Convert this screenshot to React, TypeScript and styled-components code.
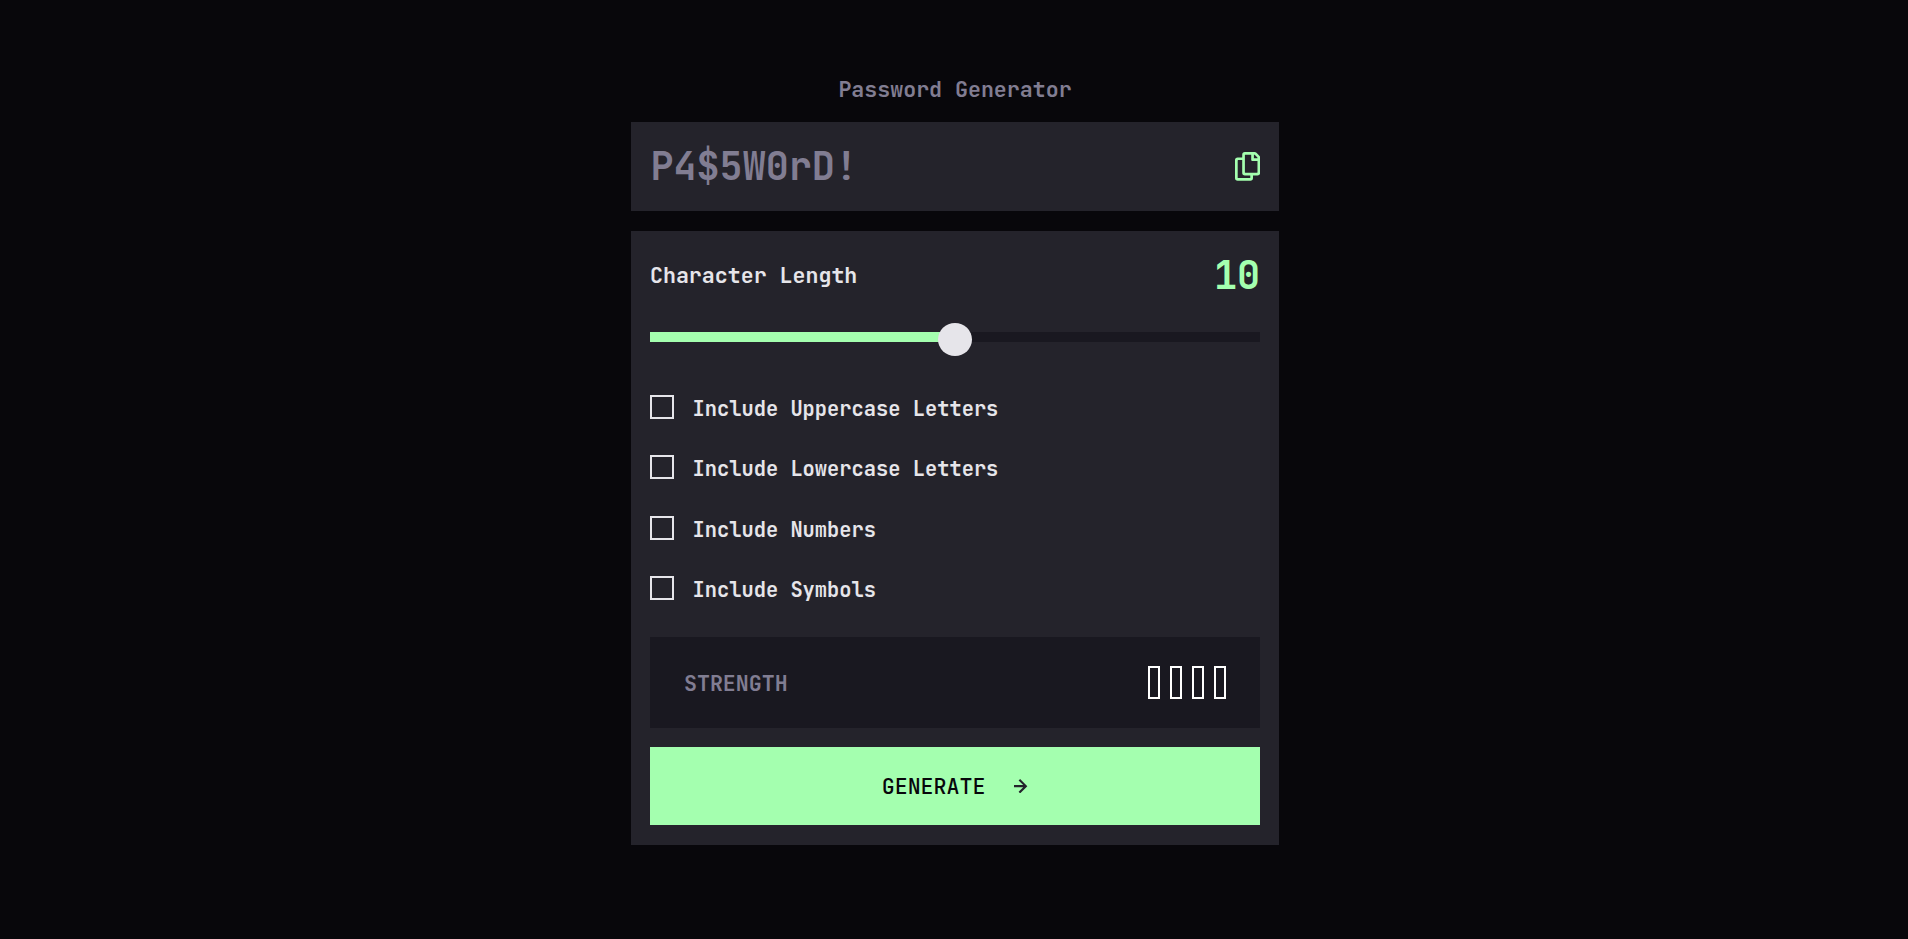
import React, { useState } from 'react';
import styled, { createGlobalStyle } from 'styled-components';

const color = {
  page: '#08070b',
  panel: '#24232b',
  deep: '#191820',
  muted: '#817d92',
  light: '#e6e5ea',
  green: '#a4ffaf',
};

const GlobalStyle = createGlobalStyle`
  * { box-sizing: border-box; }
  body {
    margin: 0;
    background: ${color.page};
    font-family: 'JetBrains Mono', 'DejaVu Sans Mono', monospace;
  }
`;

const Page = styled.main`
  min-height: 939px;
  display: flex;
  flex-direction: column;
  align-items: center;
  padding: 75px 0 0 2px;
`;

const Column = styled.div`
  width: 648px;
  display: flex;
  flex-direction: column;
`;

const Text = styled.span<{ $tone?: string; $weight?: number }>`
  font-size: 21.6px;
  font-weight: ${({ $weight = 600 }) => $weight};
  line-height: 28px;
  white-space: pre;
  color: ${({ $tone = color.light }) => $tone};
`;

const BigText = styled(Text)`
  font-size: 38.4px;
  line-height: 51px;
`;

const Title = styled(Text).attrs({ as: 'h1' })`
  margin: 0 0 19px;
  text-align: center;
`;

const PasswordBox = styled.section`
  height: 89px;
  padding: 0 19px 0 19.5px;
  display: flex;
  align-items: center;
  justify-content: space-between;
  background: ${color.panel};
`;

const IconButton = styled.button`
  display: flex;
  padding: 0;
  border: 0;
  background: none;
  color: ${color.green};
  cursor: pointer;
`;

const Panel = styled.section`
  height: 614px;
  margin-top: 20px;
  padding: 19px 19px 20px;
  display: flex;
  flex-direction: column;
  background: ${color.panel};
`;

const LengthRow = styled.div`
  height: 51px;
  display: flex;
  align-items: center;
  justify-content: space-between;
`;

const LengthLabel = styled(Text)`
  padding-bottom: 1px;
`;

const Slider = styled.input<{ $fill: number }>`
  appearance: none;
  width: 100%;
  height: 10px;
  margin: 31px 0 53px;
  border-radius: 0;
  outline: none;
  background: linear-gradient(
    to right,
    ${color.green} ${({ $fill }) => $fill}%,
    ${color.deep} ${({ $fill }) => $fill}%
  );

  &::-webkit-slider-thumb {
    appearance: none;
    width: 34px;
    height: 33px;
    margin-top: 5px;
    border-radius: 50%;
    background: ${color.light};
    cursor: pointer;
  }
`;

const Options = styled.div`
  height: 205px;
  display: flex;
  flex-direction: column;
  justify-content: space-between;
`;

const Option = styled.label`
  height: 24px;
  display: flex;
  align-items: center;
  gap: 18.5px;
  cursor: pointer;
`;

const OptionText = styled(Text)`
  padding-top: 3px;
  font-size: 20.4px;
  line-height: 27px;
`;

const Checkbox = styled.input`
  appearance: none;
  width: 24px;
  height: 24px;
  margin: 0;
  border: 2px solid ${color.light};

  &:checked {
    border-color: ${color.green};
    background: ${color.green};
  }
`;

const StrengthBox = styled.div`
  height: 91px;
  margin-top: 37px;
  padding: 0 34px;
  display: flex;
  align-items: center;
  justify-content: space-between;
  background: ${color.deep};
`;

const StrengthLabel = styled(Text)`
  padding-top: 1px;
`;

const Bars = styled.div`
  display: flex;
  gap: 10px;
`;

const Bar = styled.span`
  width: 12px;
  height: 33px;
  border: 2px solid #fff;
`;

const GenerateButton = styled.button`
  height: 78px;
  margin-top: 19px;
  padding: 0;
  display: flex;
  align-items: center;
  justify-content: center;
  gap: 28.5px;
  border: 0;
  background: ${color.green};
  color: ${color.panel};
  font-family: inherit;
  cursor: pointer;
`;

const CopyIcon = () => (
  <svg width="25.2" height="28.8" viewBox="0 0 21 24" fill="currentColor">
    <path d="M20.341 3.091 17.909.659A2.25 2.25 0 0 0 16.319 0H8.25A2.25 2.25 0 0 0 6 2.25V4.5H2.25A2.25 2.25 0 0 0 0 6.75v15A2.25 2.25 0 0 0 2.25 24h10.5A2.25 2.25 0 0 0 15 21.75V19.5h3.75A2.25 2.25 0 0 0 21 17.25V4.682a2.25 2.25 0 0 0-.659-1.591ZM12.469 21.75H2.53a.281.281 0 0 1-.281-.281V7.03a.281.281 0 0 1 .281-.281H6v10.5a2.25 2.25 0 0 0 2.25 2.25h4.5v1.969a.282.282 0 0 1-.281.281Zm6-4.5H8.53a.281.281 0 0 1-.281-.281V2.53a.281.281 0 0 1 .281-.281H13.5v4.125c0 .621.504 1.125 1.125 1.125h4.125v9.469a.282.282 0 0 1-.281.281Zm.281-12h-3v-3h.451c.075 0 .147.03.2.082L18.667 4.6a.283.283 0 0 1 .082.199v.451Z" />
  </svg>
);

const ArrowIcon = () => (
  <svg width="14.4" height="14.4" viewBox="0 0 12 12" fill="currentColor">
    <path d="m5.106 12 6-6-6-6-1.265 1.265 3.841 3.84H.001v1.79h7.681l-3.841 3.84z" />
  </svg>
);

const optionNames = ['Uppercase Letters', 'Lowercase Letters', 'Numbers', 'Symbols'];
const maxLength = 20;

export default function App() {
  const [length, setLength] = useState(10);

  return (
    <>
      <GlobalStyle />
      <Page>
        <Column>
          <Title $tone={color.muted} $weight={700}>Password Generator</Title>
          <PasswordBox>
            <BigText $tone={color.muted} $weight={700}>P4$5W0rD!</BigText>
            <IconButton aria-label="Copy password">
              <CopyIcon />
            </IconButton>
          </PasswordBox>
          <Panel>
            <LengthRow>
              <LengthLabel>Character Length</LengthLabel>
              <BigText $tone={color.green}>{length}</BigText>
            </LengthRow>
            <Slider
              type="range"
              min={0}
              max={maxLength}
              value={length}
              $fill={(length / maxLength) * 100}
              onChange={(e) => setLength(Number(e.target.value))}
            />
            <Options>
              {optionNames.map((name) => (
                <Option key={name}>
                  <Checkbox type="checkbox" />
                  <OptionText>Include {name}</OptionText>
                </Option>
              ))}
            </Options>
            <StrengthBox>
              <StrengthLabel $tone={color.muted} $weight={700}>STRENGTH</StrengthLabel>
              <Bars>
                <Bar />
                <Bar />
                <Bar />
                <Bar />
              </Bars>
            </StrengthBox>
            <GenerateButton>
              <Text $tone="#08070b" $weight={500}>GENERATE</Text>
              <ArrowIcon />
            </GenerateButton>
          </Panel>
        </Column>
      </Page>
    </>
  );
}
